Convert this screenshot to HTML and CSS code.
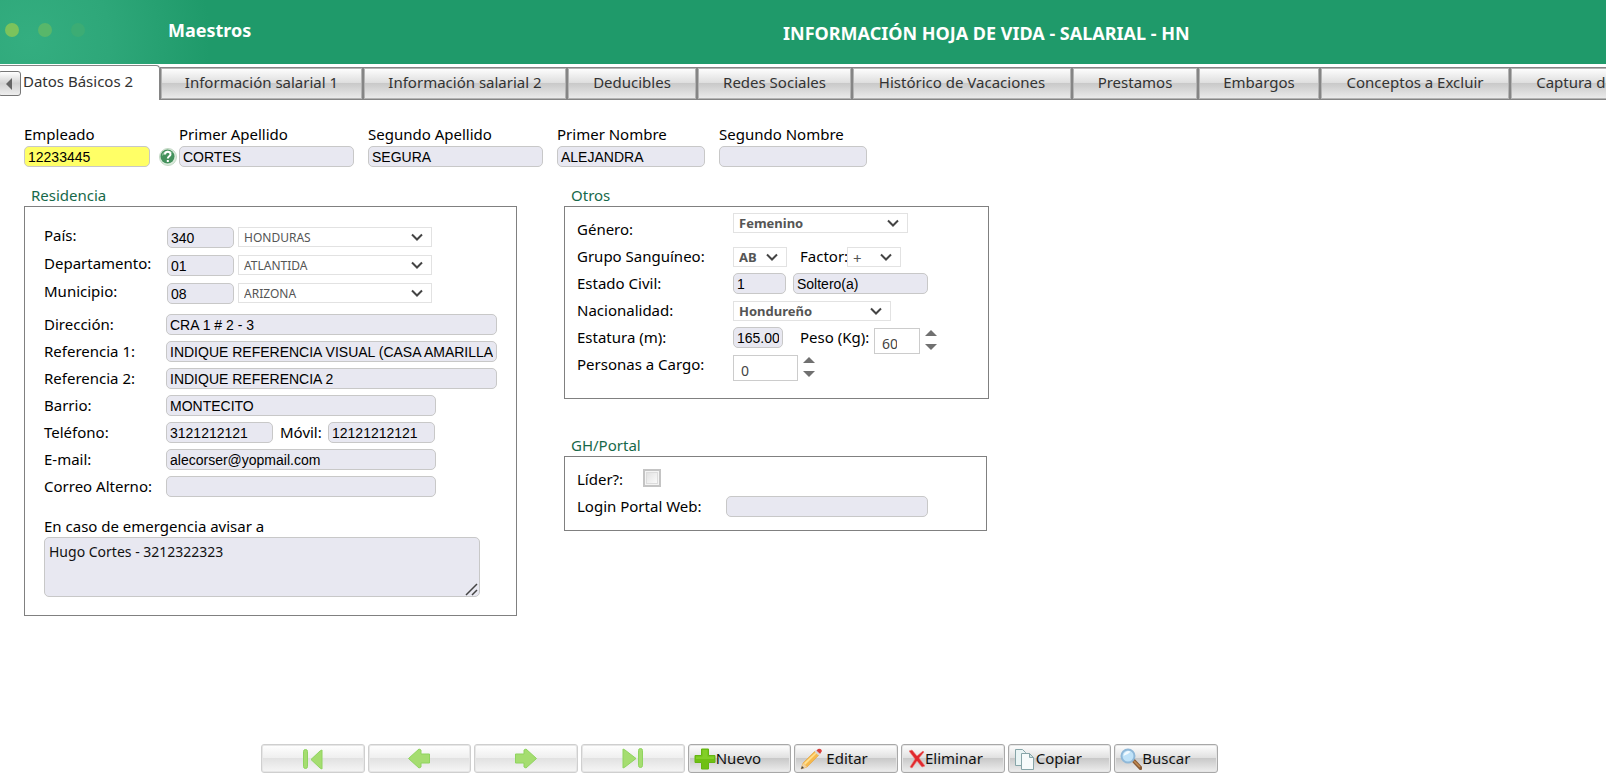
FILE: index.html
```html
<!DOCTYPE html>
<html lang="es">
<head>
    <meta charset="UTF-8">
    <meta name="viewport" content="width=device-width, initial-scale=1.0">
    <title>Información Hoja de Vida - Salarial - HN</title>
    <link rel="stylesheet" href="styles.css">
</head>
<body>
    <header class="header">
        <svg class="dots" width="86" height="16" viewBox="0 0 86 16" aria-hidden="true">
            <circle cx="12" cy="8" r="7" fill="#7cc35c"/>
            <circle cx="45" cy="8" r="7" fill="#58b76a"/>
            <circle cx="78" cy="8" r="7" fill="#3cac74"/>
        </svg>
        <span class="module">Maestros</span>
        <h1 class="title">INFORMACIÓN HOJA DE VIDA - SALARIAL - HN</h1>
    </header>

    <nav class="tabs">
        <button type="button" class="tab active">Datos Básicos 2</button>
        <button type="button" class="tab">Información salarial 1</button>
        <button type="button" class="tab">Información salarial 2</button>
        <button type="button" class="tab">Deducibles</button>
        <button type="button" class="tab">Redes Sociales</button>
        <button type="button" class="tab">Histórico de Vacaciones</button>
        <button type="button" class="tab">Prestamos</button>
        <button type="button" class="tab">Embargos</button>
        <button type="button" class="tab">Conceptos a Excluir</button>
        <button type="button" class="tab">Captura de Datos</button>
        <button type="button" class="scroll-left" aria-label="Anterior">
            <svg width="7" height="12" viewBox="0 0 7 12"><path d="M6 0v12L0 6z" fill="#666"/></svg>
        </button>
    </nav>

    <form id="employeeForm">
        <div class="person">
            <div class="field employee">
                <label for="empleado">Empleado</label>
                <input type="text" id="empleado" class="box key" value="12233445">
            </div>
            <button type="button" class="help" aria-label="Ayuda">
                <svg width="18" height="20" viewBox="0 0 18 20">
                    <circle cx="9" cy="10" r="8.5" fill="#dcebdc" stroke="#c3d8c5"/>
                    <circle cx="8.5" cy="9.5" r="7" fill="#43915c"/>
                    <path d="M3 7a7 7 0 0 1 11-1C11 5 7 5 3 9z" fill="#86bd93"/>
                    <path d="M6 7.500c0-3.500 5.500-3.500 5.500-.3 0 2-2.700 2-2.700 4.300M8.800 13v2" fill="none" stroke="#fff" stroke-width="2"/>
                </svg>
            </button>
            <div class="field surname">
                <label for="apellido1">Primer Apellido</label>
                <input type="text" id="apellido1" class="box" value="CORTES">
            </div>
            <div class="field surname">
                <label for="apellido2">Segundo Apellido</label>
                <input type="text" id="apellido2" class="box" value="SEGURA">
            </div>
            <div class="field name">
                <label for="nombre1">Primer Nombre</label>
                <input type="text" id="nombre1" class="box" value="ALEJANDRA">
            </div>
            <div class="field name">
                <label for="nombre2">Segundo Nombre</label>
                <input type="text" id="nombre2" class="box" value="">
            </div>
        </div>

        <div class="columns">
            <section class="group">
                <h2>Residencia</h2>
                <div class="panel residence">
                    <div class="row place">
                        <label for="pais">País:</label>
                        <input type="text" id="pais" class="box w-code" value="340">
                        <select class="w-place" aria-label="País"><option>HONDURAS</option></select>
                    </div>
                    <div class="row place">
                        <label for="departamento">Departamento:</label>
                        <input type="text" id="departamento" class="box w-code" value="01">
                        <select class="w-place" aria-label="Departamento"><option>ATLANTIDA</option></select>
                    </div>
                    <div class="row place">
                        <label for="municipio">Municipio:</label>
                        <input type="text" id="municipio" class="box w-code" value="08">
                        <select class="w-place" aria-label="Municipio"><option>ARIZONA</option></select>
                    </div>
                    <div class="row address">
                        <label for="direccion">Dirección:</label>
                        <input type="text" id="direccion" class="box w-full" value="CRA 1 # 2 - 3">
                    </div>
                    <div class="row">
                        <label for="referencia1">Referencia 1:</label>
                        <input type="text" id="referencia1" class="box w-full" value="INDIQUE REFERENCIA VISUAL (CASA AMARILLA)">
                    </div>
                    <div class="row">
                        <label for="referencia2">Referencia 2:</label>
                        <input type="text" id="referencia2" class="box w-full" value="INDIQUE REFERENCIA 2">
                    </div>
                    <div class="row">
                        <label for="barrio">Barrio:</label>
                        <input type="text" id="barrio" class="box w-mid" value="MONTECITO">
                    </div>
                    <div class="row">
                        <label for="telefono">Teléfono:</label>
                        <input type="text" id="telefono" class="box w-phone" value="3121212121">
                        <label for="movil" class="mobile">Móvil:</label>
                        <input type="text" id="movil" class="box w-phone" value="12121212121">
                    </div>
                    <div class="row">
                        <label for="email">E-mail:</label>
                        <input type="text" id="email" class="box w-mid" value="alecorser@yopmail.com">
                    </div>
                    <div class="row">
                        <label for="correo">Correo Alterno:</label>
                        <input type="text" id="correo" class="box w-mid" value="">
                    </div>
                    <div class="emergency">
                        <label for="emergencia">En caso de emergencia avisar a</label>
                        <div class="note">
                            <textarea id="emergencia">Hugo Cortes - 3212322323</textarea>
                            <svg class="grip" width="13" height="13" viewBox="0 0 13 13" aria-hidden="true"><path d="M1 12 12 1M7 12l5-5" stroke="#444" stroke-width="1.500"/></svg>
                        </div>
                    </div>
                </div>
            </section>

            <div class="side">
                <section class="group">
                    <h2>Otros</h2>
                    <div class="panel others">
                        <div class="row gender">
                            <label for="genero">Género:</label>
                            <select id="genero" class="strong w-gender"><option>Femenino</option></select>
                        </div>
                        <div class="row">
                            <label for="grupo">Grupo Sanguíneo:</label>
                            <select id="grupo" class="strong w-blood"><option>AB</option></select>
                            <label for="factor" class="second">Factor:</label>
                            <select id="factor" class="sign w-blood"><option>+</option></select>
                        </div>
                        <div class="row">
                            <label for="civil">Estado Civil:</label>
                            <input type="text" id="civil" class="box w-civil" value="1">
                            <input type="text" class="box w-status" aria-label="Descripción estado civil" value="Soltero(a)">
                        </div>
                        <div class="row">
                            <label for="nacionalidad">Nacionalidad:</label>
                            <select id="nacionalidad" class="strong w-nation"><option>Hondureño</option></select>
                        </div>
                        <div class="row">
                            <label for="estatura">Estatura (m):</label>
                            <input type="text" id="estatura" class="box w-height" value="165.00">
                            <label for="peso" class="second">Peso (Kg):</label>
                            <div class="spin">
                                <input type="number" id="peso" class="w-weight" value="60">
                                <div class="arrows">
                                    <button type="button" data-step="1" aria-label="Aumentar peso"><svg width="12" height="6" viewBox="0 0 12 6"><path d="M6 0l6 6H0z" fill="#707070"/></svg></button>
                                    <button type="button" data-step="-1" aria-label="Disminuir peso"><svg width="12" height="6" viewBox="0 0 12 6"><path d="M0 0h12L6 6z" fill="#707070"/></svg></button>
                                </div>
                            </div>
                        </div>
                        <div class="row">
                            <label for="personas">Personas a Cargo:</label>
                            <div class="spin">
                                <input type="number" id="personas" class="w-people" value="0">
                                <div class="arrows">
                                    <button type="button" data-step="1" aria-label="Aumentar personas"><svg width="12" height="6" viewBox="0 0 12 6"><path d="M6 0l6 6H0z" fill="#707070"/></svg></button>
                                    <button type="button" data-step="-1" aria-label="Disminuir personas"><svg width="12" height="6" viewBox="0 0 12 6"><path d="M0 0h12L6 6z" fill="#707070"/></svg></button>
                                </div>
                            </div>
                        </div>
                    </div>
                </section>

                <section class="group">
                    <h2>GH/Portal</h2>
                    <div class="panel portal">
                        <div class="row">
                            <label for="lider" class="leader">Líder?:</label>
                            <input type="checkbox" id="lider">
                        </div>
                        <div class="row">
                            <label for="login">Login Portal Web:</label>
                            <input type="text" id="login" class="box w-login" value="">
                        </div>
                    </div>
                </section>
            </div>
        </div>
    </form>

    <div class="toolbar">
        <button type="button" disabled aria-label="Primero">
            <svg width="22" height="22" viewBox="0 0 22 22" fill="#a5dd70" stroke="#8fd45f"><rect x="1.500" y="1.500" width="4" height="19" rx="2"/><path d="M20 2v19l-2-1-9-8.500L18 3z"/></svg>
        </button>
        <button type="button" disabled aria-label="Anterior">
            <svg width="22" height="22" viewBox="0 0 22 22" fill="#a5dd70" stroke="#8fd45f"><path d="M.5 10.500 11 1l2 1v4h8.500v9H13v4l-2 1z"/></svg>
        </button>
        <button type="button" disabled aria-label="Siguiente">
            <svg width="22" height="22" viewBox="0 0 22 22" fill="#a5dd70" stroke="#8fd45f"><path d="M21.500 10.500 11 1 9 2v4H.5v9H9v4l2 1z"/></svg>
        </button>
        <button type="button" disabled aria-label="Último">
            <svg width="22" height="22" viewBox="0 0 22 22" fill="#a5dd70" stroke="#8fd45f"><path d="M1 1v19l2-1 11-8.500L3 2z"/><rect x="16.500" y=".5" width="4" height="19" rx="2"/></svg>
        </button>
        <button type="button">
            <svg width="22" height="22" viewBox="0 0 22 22"><path d="M7.500 1h7v6.500H21v7h-6.500V21h-7v-6.500H1v-7h6.500z" fill="#6fc013" stroke="#64b512" stroke-linejoin="round"/><path d="M8.500 2h5v6.500H20V11H2V8.500h6.500z" fill="#82cf28"/></svg>
            <span>Nuevo</span>
        </button>
        <button type="button" class="spaced">
            <svg width="22" height="22" viewBox="0 0 22 22"><path d="M1 21l2-6L15 3l4 4L7 19z" fill="#f6b94b" stroke="#e0a040" stroke-width=".6"/><path d="M4 15 16 4l1 1L5 17z" fill="#ffe08f"/><path d="M16 3l2-2q3-1 4 2l-2 3z" fill="#d9403a"/><path d="M14.500 3.500l4 4 1.500-1.500-4-4z" fill="#d8d8d8"/><path d="M1 21l2-6 4 4z" fill="#f0d2a2"/><path d="M1 21l1-3 2 2z" fill="#444"/></svg>
            <span>Editar</span>
        </button>
        <button type="button" class="shifted">
            <svg width="16" height="22" viewBox="0 0 16 22"><path d="M0 3l3-1 5 6 6-5 1 1-5 6 6 8-3 1-5-6-5 7-2-1 5-8z" fill="#e0282e" stroke="#f07a76" stroke-width=".6"/></svg>
            <span>Eliminar</span>
        </button>
        <button type="button">
            <svg width="22" height="22" viewBox="0 0 22 22" fill="#eaf4f4" stroke="#87a5a8"><path d="M1.500 1.500h7l3 3v13h-10z"/><path d="M7.500 5.500h8l4 4v12h-12z" fill="#f7fbfb"/><path d="M15.500 5.500v4h4z" fill="#cfe1e2"/></svg>
            <span>Copiar</span>
        </button>
        <button type="button">
            <svg width="22" height="22" viewBox="0 0 22 22"><path d="M13 12l7.500 8" stroke="#8a5a33" stroke-width="4" stroke-linecap="round"/><path d="M14 13l6 6" stroke="#c08a50" stroke-width="1.500"/><circle cx="8" cy="8" r="6.500" fill="#bfe2f8" stroke="#8fb8d8" stroke-width="2"/><path d="M3.500 8a5 5 0 0 1 7-4.500C9 6 6 6.500 3.500 8z" fill="#f2faff"/></svg>
            <span>Buscar</span>
        </button>
    </div>

    <script>
        document.querySelectorAll('.arrows button').forEach(function(button) {
            button.addEventListener('click', function() {
                let input = button.closest('.spin').querySelector('input');
                input.value = Number(input.value) + Number(button.dataset.step);
            });
        });
    </script>
</body>
</html>
```

FILE: styles.css
```css
* {
    box-sizing: border-box;
}

body {
    font-family: "Noto Sans", sans-serif;
    font-size: 15px;
    line-height: 20px;
    color: #000;
    background-color: #fff;
    margin: 0;
    min-height: 100vh;
    display: flex;
    flex-direction: column;
    overflow-x: hidden;
}

button {
    font-family: inherit;
    cursor: pointer;
}

/* Header */
.header {
    display: flex;
    align-items: center;
    height: 64px;
    padding-bottom: 4px;
    color: #fff;
    background: #1f9a6a radial-gradient(circle at 30px 40px, #34ae80 0, #2ea779 80px, #1f9a6a 180px);
}

.module {
    width: 615px;
    margin-left: 82px;
    font-size: 18px;
    font-weight: bold;
}

.title {
    margin: 0;
    padding-top: 6px;
    font-size: 18px;
    font-weight: bold;
    white-space: nowrap;
}

/* Tabs */
.tabs {
    position: relative;
    display: grid;
    grid-template-columns: 160px 203px 204px 130px 155px 220px 126px 122px 190px 175px;
    align-items: end;
    height: 35px;
    margin-top: 1px;
    overflow: hidden;
}

.tab {
    height: 33px;
    padding: 0 0 4px;
    font-size: 15px;
    color: #333;
    white-space: nowrap;
    border: 1px solid #858585;
    box-shadow: inset 0 0 0 1px #b4b4b4;
    background: linear-gradient(#fff, #dedede 48%, #c9c9c9 50%, #ececec);
}

.tab.active {
    height: 35px;
    padding: 0 0 4px 23px;
    text-align: left;
    border-width: 1px 1px 0 0;
    border-radius: 0 4px 0 0;
    box-shadow: none;
    background: #fff;
}

.scroll-left {
    position: absolute;
    left: -2px;
    top: 6px;
    width: 23px;
    height: 25px;
    padding: 0;
    border: 1px solid #777;
    border-radius: 3px;
    background: linear-gradient(#fff, #d2d2d2 50%, #eee);
}

.scroll-left svg {
    display: block;
    margin: 0 auto;
}

/* Fields */
.box {
    height: 21px;
    padding: 1px 3px 0;
    font-family: "Liberation Sans", Arial, sans-serif;
    font-size: 14px;
    color: #000;
    background-color: #e8e8f1;
    border: 1px solid #c8c8c8;
    border-radius: 5px;
}

.box.key {
    background-color: #ffff66;
}

select {
    appearance: none;
    height: 20px;
    padding: 0 5px;
    font-family: "Noto Sans", sans-serif;
    font-size: 12px;
    color: #555;
    border: 1px solid #e2e2e2;
    border-radius: 0;
    background: #fff url("data:image/svg+xml,%3Csvg xmlns='http://www.w3.org/2000/svg' width='14' height='8'%3E%3Cpath d='M2 1.500l5 5 5-5' fill='none' stroke='%23444' stroke-width='2'/%3E%3C/svg%3E") no-repeat right 7px center;
}

select.strong {
    font-size: 13px;
    font-weight: bold;
}

select.sign {
    font-size: 15px;
}

#employeeForm {
    padding: 24px 24px 0;
}

.person {
    display: flex;
    align-items: flex-end;
    gap: 14px;
}

.field {
    display: flex;
    flex-direction: column;
    gap: 2px;
}

.employee {
    width: 126px;
}

.surname {
    width: 175px;
}

.name {
    width: 148px;
}

.help {
    width: 19px;
    height: 20px;
    margin: 0 -13px 0 -5px;
    padding: 0;
    border: none;
    background: none;
}

.help svg {
    display: block;
}

/* Groups */
.columns {
    display: flex;
    align-items: flex-start;
    gap: 47px;
    margin-top: 18px;
}

.group h2 {
    margin: 0;
    padding: 0 0 1px 7px;
    font-size: 15px;
    font-weight: normal;
    line-height: 20px;
    color: #17694a;
}

.panel {
    border: 1px solid #808080;
}

.row {
    display: flex;
    align-items: center;
    height: 27px;
}

.row label {
    padding-bottom: 2px;
}

.residence {
    width: 493px;
    padding: 16px 19px 18px;
}

.residence .row > label:first-child {
    width: 122px;
}

.place {
    height: 28px;
}

.place .box {
    margin-left: 1px;
}

.place select {
    margin-left: 4px;
}

.place label {
    padding-bottom: 4px;
}

.address {
    margin-top: 4px;
}

.mobile {
    width: 55px;
    padding-left: 7px;
}

.w-code {
    width: 67px;
}

.w-place {
    width: 194px;
}

.w-full {
    width: 331px;
}

.w-mid {
    width: 270px;
}

.w-phone {
    width: 107px;
}

.emergency {
    margin-top: 16px;
}

.emergency label {
    display: block;
    padding-bottom: 1px;
}

.note {
    position: relative;
    width: 436px;
    height: 60px;
}

textarea {
    display: block;
    width: 100%;
    height: 100%;
    padding: 4px;
    font-family: "Noto Sans", sans-serif;
    font-size: 14px;
    line-height: 20px;
    color: #111;
    resize: none;
    background-color: #e8e8f1;
    border: 1px solid #c8c8c8;
    border-radius: 5px;
}

.grip {
    position: absolute;
    right: 2px;
    bottom: 1px;
}

.others {
    width: 425px;
    height: 193px;
    padding: 6px 12px;
}

.others .row > label:first-child {
    width: 156px;
}

.others .gender {
    height: 30px;
    align-items: flex-start;
}

.gender label {
    align-self: flex-end;
    padding-bottom: 4px;
}

.others .second {
    width: 60px;
    padding-left: 13px;
}

.others .w-height + .second {
    width: 91px;
    padding-left: 17px;
}

.w-gender {
    width: 175px;
}

.w-blood {
    width: 54px;
}

.w-civil {
    width: 53px;
    margin-right: 7px;
}

.w-status {
    width: 135px;
}

.w-nation {
    width: 158px;
}

.w-height {
    width: 50px;
}

/* Number fields with their own arrows */
.spin {
    display: flex;
    align-self: flex-start;
    gap: 5px;
    margin-top: 4px;
}

.spin input {
    appearance: textfield;
    height: 26px;
    padding: 4px 7px 0;
    font-family: "Noto Sans", sans-serif;
    font-size: 14px;
    color: #444;
    border: 1px solid #ccc;
    background-color: #fff;
}

.w-weight {
    width: 46px;
}

.w-people {
    width: 65px;
}

.arrows {
    display: flex;
    flex-direction: column;
    gap: 8px;
    padding-top: 2px;
}

.arrows button {
    padding: 0;
    border: none;
    background: none;
}

.arrows svg {
    display: block;
}

.side .group + .group {
    margin-top: 36px;
}

.portal {
    width: 423px;
    padding: 9px 12px 10px;
}

.portal label {
    width: 149px;
}

.portal .leader {
    width: 66px;
}

.w-login {
    width: 202px;
}

#lider {
    appearance: none;
    width: 18px;
    height: 18px;
    margin: 0 0 3px;
    border: 2px solid #c4c4c4;
    box-shadow: inset 0 0 0 1px #f4f4f4, inset 0 0 0 2px #dcdcdc;
    background: linear-gradient(135deg, #ddd, #fff);
}

/* Bottom toolbar */
.toolbar {
    display: grid;
    grid-template-columns: repeat(9, 1fr);
    gap: 3px;
    width: 957px;
    margin: auto 0 2px 261px;
}

.toolbar button {
    display: flex;
    align-items: center;
    height: 29px;
    padding: 0 5px;
    font-size: 15px;
    color: #111;
    border: 1px solid #a8a8a8;
    border-radius: 3px;
    box-shadow: inset 0 0 0 1px #e6e6e6;
    background: linear-gradient(#fff, #e0e0e0 48%, #c9c9c9 50%, #eee);
}

.toolbar button:disabled {
    justify-content: center;
    border-color: #cfcfcf;
    background: linear-gradient(#fff, #efefef 48%, #e2e2e2 50%, #f6f6f6);
}

.toolbar span {
    padding-bottom: 2px;
}

.toolbar .spaced span {
    padding-left: 4px;
}

.toolbar .shifted {
    padding-left: 7px;
}
```
